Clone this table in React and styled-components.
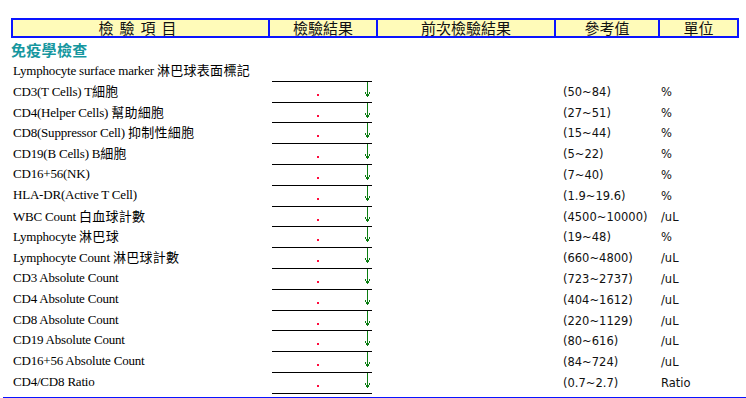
import React from "react";
import styled, { createGlobalStyle } from "styled-components";

const Global = createGlobalStyle`
  html, body { margin: 0; padding: 0; background: #ffffff; }
  body { font-family: "Liberation Serif", "Noto Sans CJK TC", serif; }
`;

const Page = styled.div`
  width: 746px;
  height: 398px;
  box-sizing: border-box;
  padding: 18px 0 0 11px;
  overflow: hidden;
`;

const HeaderBar = styled.div`
  display: grid;
  grid-template-columns: 255px 108px 178px 104px 1fr;
  width: 728px;
  height: 20px;
  box-sizing: border-box;
  border: 2px solid #0a14ff;
  background: #fffbb9;
`;

const HeaderCell = styled.div`
  display: flex;
  align-items: center;
  justify-content: center;
  border-left: ${(p) => (p.$first ? "none" : "2px solid #0a14ff")};
  font-family: "Noto Sans CJK TC", sans-serif;
  font-size: 15px;
  line-height: 16px;
  color: #111;
  letter-spacing: ${(p) => p.$spread || "0"};
  white-space: pre;
`;

const SectionTitle = styled.div`
  height: 22px;
  display: flex;
  align-items: center;
  font-family: "Noto Sans CJK TC", sans-serif;
  font-weight: 700;
  font-size: 15px;
  color: #16979f;
  letter-spacing: 0.3px;
`;

const Row = styled.div`
  display: grid;
  grid-template-columns: 259px 100px 191px 98px 1fr;
  height: 20.8px;
  padding-left: 2px;
`;

const Name = styled.div`
  font-family: "Liberation Serif", "Noto Sans CJK TC", serif;
  font-size: 13px;
  letter-spacing: -0.2px;
  line-height: 20.8px;
  color: #000;
  white-space: nowrap;
`;

const Cjk = styled.span`
  font-family: "Noto Sans CJK TC", sans-serif;
  font-size: 13px;
  letter-spacing: 0.3px;
`;

const ResultCell = styled.div`
  display: flex;
  align-items: flex-start;
  padding-left: 45px;
  box-sizing: border-box;
  border-bottom: 1px solid #000;
`;

const Dot = styled.span`
  width: 2px;
  height: 2px;
  margin-top: 13px;
  background: #ff0a3c;
`;

const ArrowIcon = styled.svg`
  margin-left: auto;
  margin-right: 1px;
  margin-top: 1px;
`;

const Sans = styled.div`
  font-family: "DejaVu Sans", sans-serif;
  font-size: 11.5px;
  line-height: 20.8px;
  padding-top: 1px;
  color: #111;
  white-space: nowrap;
`;

const BottomRule = styled.div`
  margin-left: -8px;
  margin-top: 4px;
  height: 1px;
  background: #0a14ff;
`;

const Arrow = () => (
  <ArrowIcon width="7" height="15" viewBox="0 0 7 15">
    <path d="M3.5 0 V15" stroke="#0b7d12" strokeWidth="1" fill="none" />
    <path d="M1.5 10 V12 M5.5 10 V12" stroke="#0b7d12" strokeWidth="1" fill="none" />
    <rect x="2" y="12" width="3" height="2" fill="#0b7d12" />
  </ArrowIcon>
);

const rows = [
  ["CD3(T Cells) T", "細胞", "(50~84)", "%"],
  ["CD4(Helper Cells) ", "幫助細胞", "(27~51)", "%"],
  ["CD8(Suppressor Cell) ", "抑制性細胞", "(15~44)", "%"],
  ["CD19(B Cells) B", "細胞", "(5~22)", "%"],
  ["CD16+56(NK)", "", "(7~40)", "%"],
  ["HLA-DR(Active T Cell)", "", "(1.9~19.6)", "%"],
  ["WBC Count ", "白血球計數", "(4500~10000)", "/uL"],
  ["Lymphocyte ", "淋巴球", "(19~48)", "%"],
  ["Lymphocyte Count ", "淋巴球計數", "(660~4800)", "/uL"],
  ["CD3 Absolute Count", "", "(723~2737)", "/uL"],
  ["CD4 Absolute Count", "", "(404~1612)", "/uL"],
  ["CD8 Absolute Count", "", "(220~1129)", "/uL"],
  ["CD19 Absolute Count", "", "(80~616)", "/uL"],
  ["CD16+56 Absolute Count", "", "(84~724)", "/uL"],
  ["CD4/CD8 Ratio", "", "(0.7~2.7)", "Ratio"],
];

export default function App() {
  return (
    <>
      <Global />
      <Page>
        <HeaderBar>
          <HeaderCell $first $spread="6px">檢驗項目</HeaderCell>
          <HeaderCell>檢驗結果</HeaderCell>
          <HeaderCell>前次檢驗結果</HeaderCell>
          <HeaderCell>參考值</HeaderCell>
          <HeaderCell>單位</HeaderCell>
        </HeaderBar>
        <SectionTitle>免疫學檢查</SectionTitle>
        <Row>
          <Name>
            Lymphocyte surface marker <Cjk>淋巴球表面標記</Cjk>
          </Name>
          <ResultCell />
          <div />
          <div />
          <div />
        </Row>
        {rows.map(([name, cjk, ref, unit]) => (
          <Row key={name + cjk}>
            <Name>
              {name}
              {cjk && <Cjk>{cjk}</Cjk>}
            </Name>
            <ResultCell>
              <Dot />
              <Arrow />
            </ResultCell>
            <div />
            <Sans>{ref}</Sans>
            <Sans>{unit}</Sans>
          </Row>
        ))}
        <BottomRule />
      </Page>
    </>
  );
}
